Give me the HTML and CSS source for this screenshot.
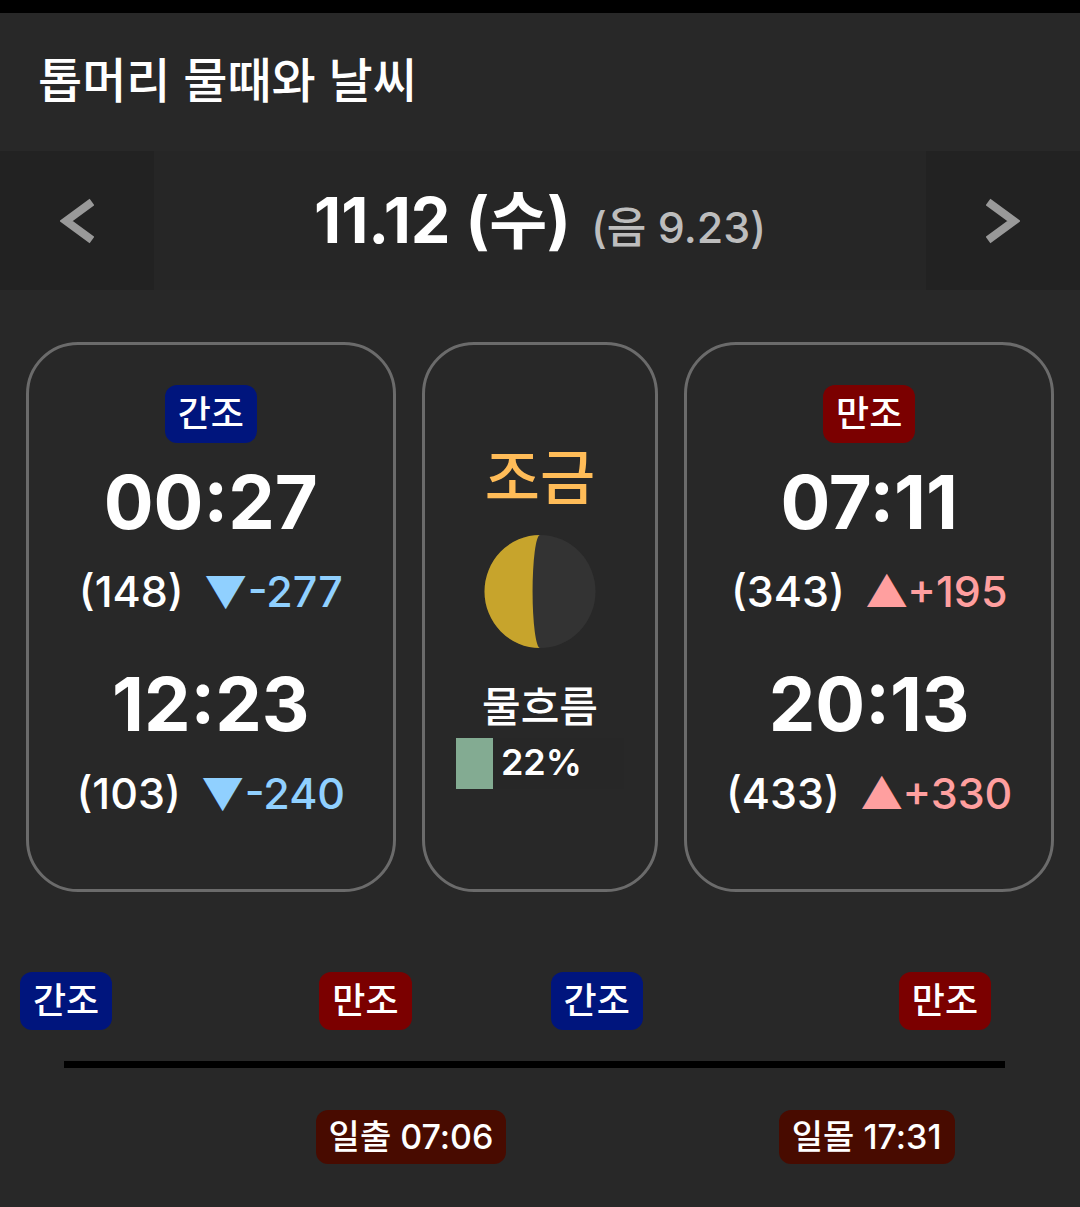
FILE: index.html
```html
<!DOCTYPE html>
<html lang="ko">
  <head>
    <meta charset="UTF-8" />
    <meta name="viewport" content="width=device-width, initial-scale=1.0" />
    <title>톱머리 물때와 날씨</title>
    <link rel="stylesheet" href="styles.css">
  </head>
  <body>
    <header class="page-header">
      <h1>톱머리 물때와 날씨</h1>
    </header>

    <nav class="date-nav">
      <button class="date-button" type="button" aria-label="이전 날짜">
        <svg width="34" height="46" viewBox="0 0 34 46">
          <path d="M32 4 L6 23 L32 42" />
        </svg>
      </button>
      <div class="date">
        <span class="date-solar">11.12 (수)</span>
        <span class="date-lunar">(음 9.23)</span>
      </div>
      <button class="date-button" type="button" aria-label="다음 날짜">
        <svg width="34" height="46" viewBox="0 0 34 46">
          <path d="M2 4 L28 23 L2 42" />
        </svg>
      </button>
    </nav>

    <main>
      <section class="cards">
        <div class="card">
          <span class="badge low">간조</span>
          <div class="tide">
            <div class="tide-time">00:27</div>
            <div class="tide-level">
              <span>(148)</span>
              <span class="fall">▼-277</span>
            </div>
          </div>
          <div class="tide">
            <div class="tide-time">12:23</div>
            <div class="tide-level">
              <span>(103)</span>
              <span class="fall">▼-240</span>
            </div>
          </div>
        </div>

        <div class="card card-moon">
          <h2>조금</h2>
          <svg class="moon" width="112" height="113" viewBox="0 0 112 114">
            <ellipse cx="56" cy="57" rx="56" ry="57" fill="#333333" />
            <path d="M56 0 A56 57 0 0 0 56 114 A7.5 57 0 0 1 56 0 Z" fill="#c7a42c" />
          </svg>
          <div class="flow-label">물흐름</div>
          <div class="flow-bar">
            <div class="flow-fill" style="width: 22%"></div>
            <span class="flow-value">22%</span>
          </div>
        </div>

        <div class="card">
          <span class="badge high">만조</span>
          <div class="tide">
            <div class="tide-time">07:11</div>
            <div class="tide-level">
              <span>(343)</span>
              <span class="rise">▲+195</span>
            </div>
          </div>
          <div class="tide">
            <div class="tide-time">20:13</div>
            <div class="tide-level">
              <span>(433)</span>
              <span class="rise">▲+330</span>
            </div>
          </div>
        </div>
      </section>

      <!-- left = minutes since midnight / 1440 -->
      <section class="timeline">
        <div class="timeline-row">
          <span class="badge low" style="left: 1.87%">간조</span>
          <span class="badge high" style="left: 29.93%">만조</span>
          <span class="badge low" style="left: 51.6%">간조</span>
          <span class="badge high" style="left: 84.24%">만조</span>
        </div>
        <hr class="timeline-line" />
        <div class="timeline-row">
          <span class="badge sun" style="left: 29.58%">일출 07:06</span>
          <span class="badge sun" style="left: 72.99%">일몰 17:31</span>
        </div>
      </section>
    </main>
  </body>
</html>
```

FILE: styles.css
```css
* {
  box-sizing: border-box;
}
body {
  margin: 0;
  border-top: 13px solid #000;
  background-color: #282828;
  color: #fff;
  font-family: Inter, "Noto Sans CJK KR", sans-serif;
  font-weight: 500;
}
.page-header {
  padding: 32px 38px 34px;
}
h1 {
  margin: 0;
  font-size: 48px;
  line-height: 72px;
  font-weight: 500;
}
.date-nav {
  display: flex;
  height: 139px;
  background-color: #262626;
}
.date-button {
  width: 154px;
  padding: 0;
  border: none;
  background-color: #222;
}
.date-button svg {
  display: block;
  margin: 0 auto;
  fill: none;
  stroke: #999;
  stroke-width: 8;
}
.date {
  flex: 1;
  display: flex;
  justify-content: center;
  align-items: baseline;
  gap: 20px;
  line-height: 139px;
}
.date-solar {
  font-size: 63px;
  font-weight: 700;
}
.date-lunar {
  font-size: 43px;
  color: #bdbdbd;
}
.cards {
  display: grid;
  grid-template-columns: 370fr 237fr 370fr;
  gap: 26px;
  padding: 52px 26px 0;
}
.card {
  display: flex;
  flex-direction: column;
  align-items: center;
  min-height: 550px;
  padding: 40px 0;
  border: 3px solid #6b6b6b;
  border-radius: 52px;
}
.badge {
  padding: 0 13px;
  border-radius: 12px;
  font-size: 36px;
  line-height: 58px;
  white-space: nowrap;
}
.low {
  background-color: #00157d;
}
.high {
  background-color: #7b0000;
}
.sun {
  background-color: #480b00;
  font-size: 34px;
  line-height: 54px;
}
.tide {
  margin-top: 14px;
  margin-bottom: 10px;
  text-align: center;
}
.tide-time {
  font-size: 74px;
  line-height: 90px;
  font-weight: 700;
}
.tide-level {
  display: flex;
  justify-content: center;
  gap: 20px;
  font-size: 43px;
  line-height: 88px;
}
.fall {
  color: #90d0ff;
}
.rise {
  color: #ff9f9f;
}
.card-moon {
  padding: 90px 0;
}
h2 {
  margin: 0 0 14px;
  font-size: 60px;
  line-height: 86px;
  font-weight: 500;
  color: #ffbc58;
}
.flow-label {
  margin-top: 28px;
  font-size: 42px;
  line-height: 62px;
}
.flow-bar {
  display: flex;
  align-items: center;
  gap: 8px;
  width: 168px;
  height: 51px;
  background-color: #272727;
}
.flow-fill {
  height: 100%;
  background-color: #83ab92;
}
.flow-value {
  padding-bottom: 4px;
  font-size: 36px;
  font-weight: 600;
}
.timeline {
  padding: 80px 13px 43px 0;
}
.timeline-row {
  position: relative;
  height: 58px;
}
.timeline-row .badge {
  position: absolute;
  top: 0;
}
.timeline-line {
  height: 7px;
  margin: 31px 62px 42px 64px;
  border: none;
  background-color: #000;
}
```
